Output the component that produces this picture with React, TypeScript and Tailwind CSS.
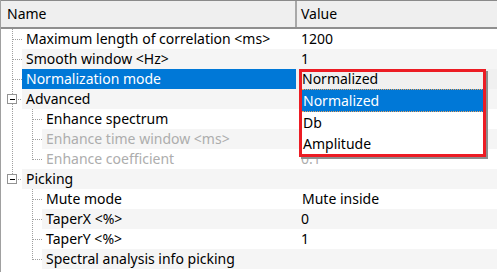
import React from "react";

type RootLine = "full" | "top" | "none";

function Dots({ x, y0, y1, vertical }: { x: number; y0: number; y1: number; vertical: boolean }) {
  const out: React.ReactElement[] = [];
  for (let p = y0; p < y1; p += 2) {
    out.push(
      vertical ? (
        <rect key={p} x={x} y={p} width={1} height={1} fill="#a0a0a0" />
      ) : (
        <rect key={p} x={p} y={x} width={1} height={1} fill="#a0a0a0" />
      )
    );
  }
  return <>{out}</>;
}

function Gutter({
  level,
  root,
  child,
  expander,
}: {
  level: 0 | 1;
  root: RootLine;
  child?: "full" | "top";
  expander?: boolean;
}) {
  const w = level === 0 ? 21 : 41;
  return (
    <svg width={w} height={20} className="shrink-0 block" shapeRendering="crispEdges">
      {level === 0 && !expander && (
        <>
          {root === "full" && <Dots x={11} y0={0} y1={20} vertical />}
          {root === "top" && <Dots x={11} y0={0} y1={11} vertical />}
          <Dots x={10} y0={12} y1={21} vertical={false} />
        </>
      )}
      {level === 0 && expander && (
        <>
          <Dots x={11} y0={0} y1={5} vertical />
          {root === "full" && <Dots x={11} y0={15} y1={20} vertical />}
          <rect x={6.5} y={5.5} width={9} height={9} fill="#ffffff" stroke="#939393" />
          <rect x={9} y={10} width={5} height={1} fill="#000000" />
          <Dots x={10} y0={17} y1={21} vertical={false} />
        </>
      )}
      {level === 1 && (
        <>
          {root === "full" && <Dots x={11} y0={0} y1={20} vertical />}
          {child === "full" && <Dots x={31} y0={0} y1={20} vertical />}
          {child === "top" && <Dots x={31} y0={0} y1={11} vertical />}
          <Dots x={10} y0={32} y1={41} vertical={false} />
        </>
      )}
    </svg>
  );
}

type Row = {
  label: string;
  value?: string;
  level: 0 | 1;
  root: RootLine;
  child?: "full" | "top";
  expander?: boolean;
  disabled?: boolean;
  selected?: boolean;
  valueInset?: boolean;
};

const rows: Row[] = [
  { label: "Maximum length of correlation <ms>", value: "1200", level: 0, root: "full" },
  { label: "Smooth window <Hz>", value: "1", level: 0, root: "full" },
  { label: "Normalization mode", level: 0, root: "full", selected: true },
  { label: "Advanced", level: 0, root: "full", expander: true },
  { label: "Enhance spectrum", level: 1, root: "full", child: "full" },
  { label: "Enhance time window <ms>", level: 1, root: "full", child: "full", disabled: true },
  { label: "Enhance coefficient", value: "0.1", level: 1, root: "full", child: "top", disabled: true },
  { label: "Picking", level: 0, root: "top", expander: true },
  { label: "Mute mode", value: "Mute inside", level: 1, root: "none", child: "full", valueInset: true },
  { label: "TaperX <%>", value: "0", level: 1, root: "none", child: "full" },
  { label: "TaperY <%>", value: "1", level: 1, root: "none", child: "full" },
  { label: "Spectral analysis info picking", level: 1, root: "none", child: "top" },
];

export default function App() {
  return (
    <div className="relative w-[497px] h-[272px] overflow-hidden bg-white border-l border-[#a0a0a0] font-['Noto_Sans',sans-serif] text-[14px] text-black">
      {/* Header */}
      <div className="flex h-[29px] bg-[#efefef] border-t border-[#8a8a8a] border-b-2 border-b-[#8f8f8f]">
        <div className="w-[296px] shrink-0 flex items-center pl-[6px] border-r-2 border-[#a8a8a8] leading-[20px]">
          Name
        </div>
        <div className="flex-1 flex items-center pl-[4px] leading-[20px]">Value</div>
      </div>

      {/* Rows */}
      <div className="flex flex-col">
        {rows.map((r, i) => {
          const alt = i % 2 === 1;
          const bg = alt ? "bg-[#f5f5f5]" : "bg-white";
          const nameBg = r.selected ? "bg-[#0078d7] text-white" : bg;
          const color = r.disabled ? "text-[#adadad]" : "";
          return (
            <div key={i} className="flex h-[20px] leading-[20px]">
              <div className="flex w-[295px] shrink-0">
                <Gutter level={r.level} root={r.root} child={r.child} expander={r.expander} />
                <div className={`flex-1 pl-[4px] whitespace-nowrap overflow-hidden ${nameBg} ${color}`}>
                  {r.label}
                </div>
              </div>
              <div
                className={`flex-1 whitespace-nowrap ${r.selected ? "bg-[#f0f0f0]" : bg} ${
                  r.valueInset || r.selected ? "pl-[6px]" : "pl-[5px]"
                } ${color}`}
              >
                {r.selected ? "Normalized" : r.value ?? ""}
              </div>
            </div>
          );
        })}
      </div>

      {/* Dropdown list */}
      <div className="absolute left-[299px] top-[89px] w-[186px] h-[68px] bg-white flex flex-col pl-[2px]">
        <div className="h-[23px] leading-[21px] bg-[#0078d7] text-white border-y border-dotted border-[#e9a45f] pl-[1px]">
          Normalized
        </div>
        <div className="h-[21px] leading-[21px] pl-[1px]">Db</div>
        <div className="h-[21px] leading-[21px] pl-[1px]">Amplitude</div>
      </div>

      {/* Red annotation frame */}
      <div className="absolute left-[298px] top-[69px] w-[187px] h-[88px] border-[3px] border-[#ec1c24] shadow-[2px_2px_0_0_#8d8d8d]" />
    </div>
  );
}
